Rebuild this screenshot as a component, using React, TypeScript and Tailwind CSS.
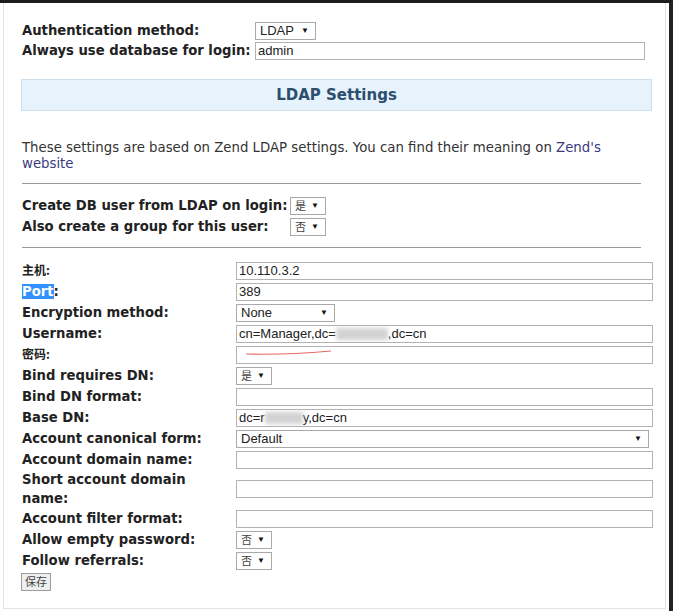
import React from "react";

const LABEL = "font-['DejaVu_Sans','Verdana',sans-serif] font-bold text-[13.2px] text-[#222]";
const FIELD = "font-['Liberation_Sans','Arial',sans-serif] text-[13px] text-[#222]";
const CJK = "font-['Noto_Sans_CJK_SC','Noto_Sans_CJK_JP',sans-serif]";

function Sel({ value, w, cjk }: { value: React.ReactNode; w: string; cjk?: boolean }) {
  return (
    <div
      className={`${w} shrink-0 h-[18px] border border-[#a9a9a9] bg-white flex items-center justify-between pl-[4px] pr-[6px] ${FIELD}`}
    >
      <span className={cjk ? `${CJK} text-[11px] text-[#444]` : ""}>{value}</span>
      <span className="text-[8px] text-[#111]">▼</span>
    </div>
  );
}

function Inp({ w, children }: { w: string; children?: React.ReactNode }) {
  return (
    <div
      className={`${w} shrink-0 h-[18px] border border-[#b3b3b3] bg-white flex items-center pl-[2px] ${FIELD} relative overflow-hidden whitespace-nowrap`}
    >
      {children}
    </div>
  );
}

function Blur({ w }: { w: string }) {
  return <span className={`inline-block ${w} h-[12px] bg-[#d2d2d2] blur-[2px] align-middle`} />;
}

type Row = { label: React.ReactNode; field: React.ReactNode; h?: string };

export default function App() {
  const rows: Row[] = [
    { label: <span className={`${CJK} text-[12px]`}>主机:</span>, field: <Inp w="w-[417px]">10.110.3.2</Inp> },
    {
      label: (
        <span>
          <span className="bg-[#3390ff] text-white">Port</span>:
        </span>
      ),
      field: <Inp w="w-[417px]">389</Inp>,
    },
    { label: "Encryption method:", field: <Sel value="None" w="w-[99px]" /> },
    {
      label: "Username:",
      field: (
        <Inp w="w-[417px]">
          cn=Manager,dc=
          <Blur w="w-[52px]" />
          ,dc=cn
        </Inp>
      ),
    },
    {
      label: <span className={`${CJK} text-[12px]`}>密码:</span>,
      field: (
        <Inp w="w-[417px]">
          <svg className="absolute left-[8px] top-[1px]" width="90" height="8" viewBox="0 0 90 8">
            <path d="M1 6 Q40 7 86 3" stroke="#e66a62" strokeWidth="1.1" fill="none" />
          </svg>
        </Inp>
      ),
    },
    { label: "Bind requires DN:", field: <Sel value="是" w="w-[36px]" cjk /> },
    { label: "Bind DN format:", field: <Inp w="w-[417px]" /> },
    {
      label: "Base DN:",
      field: (
        <Inp w="w-[417px]">
          dc=r
          <Blur w="w-[38px]" />
          y,dc=cn
        </Inp>
      ),
    },
    { label: "Account canonical form:", field: <Sel value="Default" w="w-[413px]" /> },
    { label: "Account domain name:", field: <Inp w="w-[417px]" /> },
    {
      label: (
        <span className="leading-[19px] block">
          Short account domain
          <br />
          name:
        </span>
      ),
      field: <Inp w="w-[417px]" />,
      h: "h-[38px]",
    },
    { label: "Account filter format:", field: <Inp w="w-[417px]" /> },
    { label: "Allow empty password:", field: <Sel value="否" w="w-[36px]" cjk /> },
    { label: "Follow referrals:", field: <Sel value="否" w="w-[36px]" cjk /> },
  ];

  return (
    <div className="w-[673px] h-[611px] bg-white border-t-[3px] border-t-[#1c1c1c] border-r-[4px] border-r-[#222] flex overflow-hidden">
      <div className="ml-[3px] w-[663px] h-[606px] border-l border-r border-b border-[#e3e3e3] pl-[18px] pt-[18px]">
        {/* Top rows */}
        <div className="flex items-center h-[20px]">
          <div className={`${LABEL} w-[233px] shrink-0`}>Authentication method:</div>
          <Sel value="LDAP" w="w-[61px]" />
        </div>
        <div className="flex items-center h-[20px]">
          <div className={`${LABEL} w-[233px] shrink-0 whitespace-nowrap`}>Always use database for login:</div>
          <Inp w="w-[390px]">admin</Inp>
        </div>

        {/* Header */}
        <div className="mt-[18px] -ml-px w-[631px] h-[32px] bg-[#e6f3fc] border border-[#cfe0ec] flex items-center justify-center">
          <span className="font-['DejaVu_Sans','Verdana',sans-serif] font-bold text-[15px] text-[#2d4e6c]">
            LDAP Settings
          </span>
        </div>

        {/* Paragraph */}
        <div className="mt-[29px] w-[625px] font-['DejaVu_Sans','Verdana',sans-serif] text-[13.3px] leading-[16px] text-[#333]">
          <div className="whitespace-nowrap">
            These settings are based on Zend LDAP settings. You can find their meaning on{" "}
            <span className="text-[#3b3b7e]">Zend's</span>
          </div>
          <div className="text-[#3b3b7e]">website</div>
        </div>

        <div className="mt-[11px] w-[619px] h-px bg-[#9a9a9a]" />

        <div className="mt-[11px] flex items-center h-[21px]">
          <div className={`${LABEL} w-[268px] shrink-0 whitespace-nowrap`}>Create DB user from LDAP on login:</div>
          <Sel value="是" w="w-[36px]" cjk />
        </div>
        <div className="flex items-center h-[21px]">
          <div className={`${LABEL} w-[268px] shrink-0 whitespace-nowrap`}>Also create a group for this user:</div>
          <Sel value="否" w="w-[36px]" cjk />
        </div>

        <div className="mt-[10px] w-[619px] h-px bg-[#9a9a9a]" />

        {/* Main table */}
        <div className="mt-[12px] flex flex-col">
          {rows.map((r, i) => (
            <div key={i} className={`flex items-center ${r.h ?? "h-[21px]"}`}>
              <div className={`${LABEL} w-[214px] shrink-0`}>{r.label}</div>
              {r.field}
            </div>
          ))}
          <div className="flex items-center h-[21px]">
            <button
              className={`-ml-px w-[30px] h-[18px] bg-[#efefef] border border-[#9c9c9c] ${CJK} text-[11px] text-[#444] leading-none`}
            >
              保存
            </button>
          </div>
        </div>
      </div>
    </div>
  );
}
